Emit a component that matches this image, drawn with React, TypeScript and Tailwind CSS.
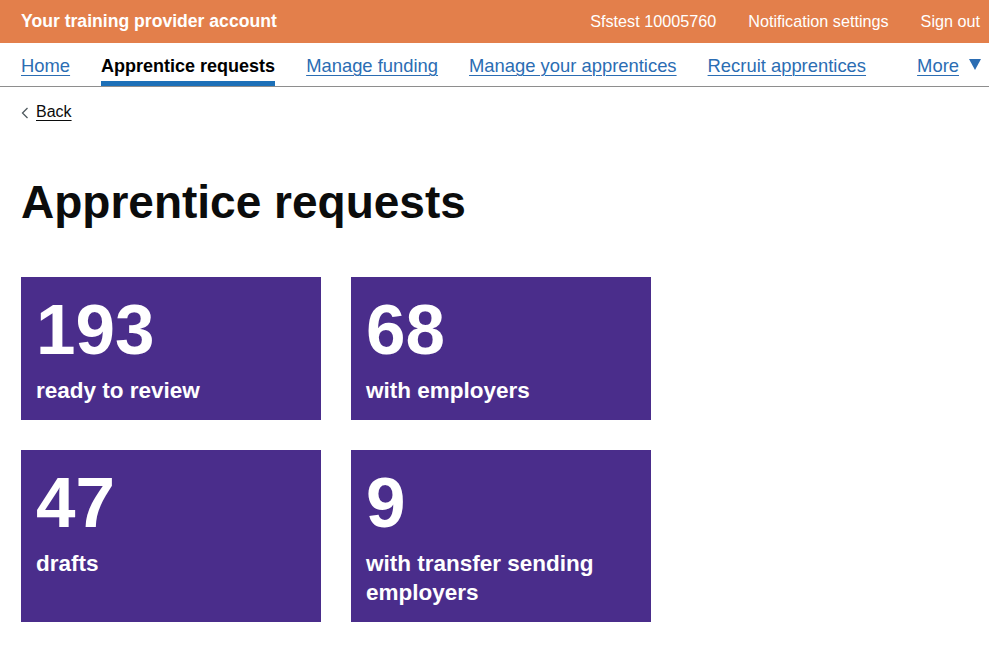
const font = { fontFamily: '"Liberation Sans", Arial, sans-serif' };

type Stat = { count: number; label: string };

const stats: Stat[] = [
  { count: 193, label: "ready to review" },
  { count: 68, label: "with employers" },
  { count: 47, label: "drafts" },
  { count: 9, label: "with transfer sending employers" },
];

const navLinks = [
  { label: "Home", active: false },
  { label: "Apprentice requests", active: true },
  { label: "Manage funding", active: false },
  { label: "Manage your apprentices", active: false },
  { label: "Recruit apprentices", active: false },
];

function Header() {
  return (
    <header className="flex h-[43px] items-center justify-between bg-[#e37f4b] pl-[21px] pr-[9px] text-white">
      <span className="text-[17.6px] font-bold">Your training provider account</span>
      <div className="flex gap-[32px] text-[16.2px]">
        <a>Sfstest 10005760</a>
        <a>Notification settings</a>
        <a>Sign out</a>
      </div>
    </header>
  );
}

function Nav() {
  return (
    <nav className="flex h-[44px] border-b border-[#8e8e8e] pl-[21px] pr-[8px] text-[18.4px] leading-[25px]">
      <ul className="flex gap-[31px]">
        {navLinks.map((link) => (
          <li
            key={link.label}
            className={`h-[43px] ${
              link.active
                ? "border-b-[5px] border-[#1d70b8] pt-[11px] text-[18px] font-bold text-black"
                : "pt-[10px]"
            }`}
          >
            <a
              className={
                link.active
                  ? ""
                  : "text-[#2b6db3] underline decoration-1 underline-offset-[3px]"
              }
            >
              {link.label}
            </a>
          </li>
        ))}
      </ul>
      <div className="ml-auto flex h-[43px] items-start gap-[10px] pt-[10px]">
        <a className="text-[#2b6db3] underline decoration-1 underline-offset-[3px]">More</a>
        <span className="mt-[6px] block h-0 w-0 border-x-[6px] border-t-[11px] border-x-transparent border-t-[#2b6db3]" />
      </div>
    </nav>
  );
}

function StatCard({ stat }: { stat: Stat }) {
  return (
    <div className="bg-[#4a2d8b] px-[15px] pb-[15px] pt-[17px] text-white">
      <div className="text-[71px] font-bold leading-[72px]">{stat.count}</div>
      <div className="mt-[10px] text-[22.5px] font-bold leading-[29px]">{stat.label}</div>
    </div>
  );
}

export default function App() {
  return (
    <div className="min-h-screen bg-white text-[#0b0c0c]" style={font}>
      <Header />
      <Nav />
      <main className="px-[21px]">
        <a className="mt-[15px] flex items-center gap-[7px] text-[16px] leading-[20px] text-[#0b0c0c]">
          <svg width="8" height="12" viewBox="0 0 8 12" className="mt-[1px]">
            <path d="M6.5 1 L1.5 6 L6.5 11" fill="none" stroke="#505a5f" strokeWidth="1.3" />
          </svg>
          <span className="underline decoration-1 underline-offset-[3px]">Back</span>
        </a>
        <h1 className="mt-[55px] text-[46px] font-bold leading-[50px] text-[#0b0c0c]">
          Apprentice requests
        </h1>
        <div className="mt-[50px] grid grid-cols-[300px_300px] gap-[30px]">
          {stats.map((stat) => (
            <StatCard key={stat.label} stat={stat} />
          ))}
        </div>
      </main>
    </div>
  );
}
